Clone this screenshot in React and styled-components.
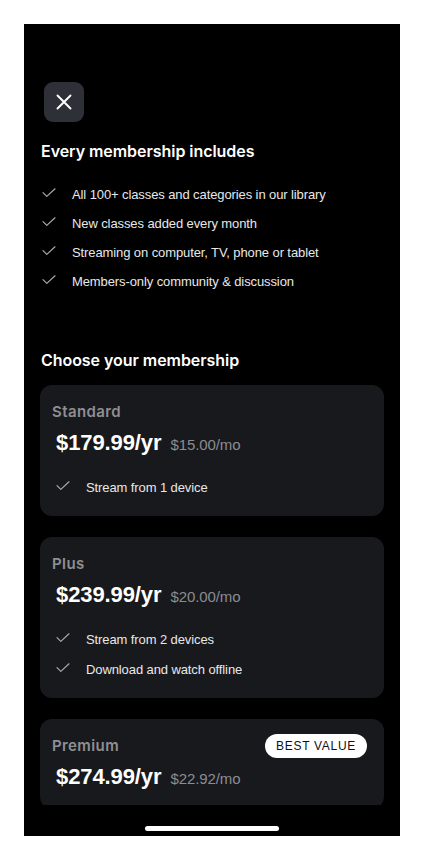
import React from "react";
import styled, { createGlobalStyle } from "styled-components";

const GlobalStyle = createGlobalStyle`
  html, body {
    margin: 0;
    padding: 0;
    background: #ffffff;
  }
  body {
    font-family: "Liberation Sans", Arial, sans-serif;
    -webkit-font-smoothing: antialiased;
  }
`;

const Page = styled.div`
  padding: 24px 24px 27px;
`;

const Screen = styled.div`
  width: 376px;
  height: 812px;
  background: #000;
  display: flex;
  flex-direction: column;
  overflow: hidden;
`;

const Scroll = styled.div`
  flex: 0 0 781px;
  overflow: hidden;
  padding: 58px 16px 0;
  box-sizing: border-box;
`;

const CloseButton = styled.button`
  width: 40px;
  height: 40px;
  margin-left: 4px;
  border: 0;
  border-radius: 9px;
  background: #2e3038;
  display: flex;
  align-items: center;
  justify-content: center;
  padding: 0;
  cursor: pointer;
`;

const SectionTitle = styled.h2`
  margin: ${(p) => p.$top}px 0 0 1px;
  font-family: Inter, "Noto Sans", sans-serif;
  font-weight: 600;
  font-size: 16px;
  line-height: 22px;
  letter-spacing: -0.05px;
  color: #fff;
`;

const List = styled.ul`
  list-style: none;
  margin: ${(p) => p.$top}px 0 0;
  padding: 0 0 0 ${(p) => p.$indent}px;
  display: flex;
  flex-direction: column;
  gap: ${(p) => p.$gap}px;
`;

const Item = styled.li`
  display: flex;
  align-items: center;
  gap: 16px;
  height: 20px;
  font-size: 13px;
  line-height: 20px;
  color: #e8e8e8;
  letter-spacing: -0.1px;
`;

const CheckIcon = styled.svg`
  flex: 0 0 14px;
  width: 14px;
  height: 10px;
  margin-top: -4px;
`;

const Cards = styled.div`
  display: flex;
  flex-direction: column;
  gap: 21px;
  margin-top: 14px;
`;

const Card = styled.div`
  background: #18191d;
  border-radius: 12px;
  padding: 17px 17px 18px 12px;
`;

const CardHead = styled.div`
  display: flex;
  align-items: center;
  justify-content: space-between;
  height: 20px;
`;

const PlanName = styled.div`
  font-family: Inter, "Noto Sans", sans-serif;
  font-weight: 600;
  font-size: 15px;
  line-height: 20px;
  letter-spacing: 0.4px;
  color: #8f8f93;
`;

const Badge = styled.span`
  height: 24px;
  padding: 0 11px;
  border-radius: 12px;
  background: #fff;
  color: #111;
  font-size: 12px;
  letter-spacing: 0.7px;
  display: flex;
  align-items: center;
`;

const PriceRow = styled.div`
  display: flex;
  align-items: baseline;
  gap: 9px;
  height: 28px;
  margin: 7px 0 0 4px;
  line-height: 28px;
`;

const Price = styled.span`
  font-weight: 700;
  font-size: 22px;
  letter-spacing: -0.1px;
  color: #fff;
`;

const Monthly = styled.span`
  font-size: 15px;
  color: #8c8c90;
  letter-spacing: -0.1px;
`;

const BottomBar = styled.div`
  flex: 1;
  display: flex;
  justify-content: center;
  padding-top: 21px;
`;

const HomeIndicator = styled.div`
  width: 134px;
  height: 5px;
  border-radius: 3px;
  background: #fff;
`;

const Check = () => (
  <CheckIcon viewBox="0 0 14 10" fill="none">
    <path
      d="M1 4.6 L4.8 8.4 L13 0.8"
      stroke="#a9a9ad"
      strokeWidth="1.2"
      strokeLinecap="round"
      strokeLinejoin="round"
    />
  </CheckIcon>
);

const included = [
  "All 100+ classes and categories in our library",
  "New classes added every month",
  "Streaming on computer, TV, phone or tablet",
  "Members-only community & discussion",
];

const plans = [
  {
    name: "Standard",
    price: "$179.99/yr",
    monthly: "$15.00/mo",
    features: ["Stream from 1 device"],
  },
  {
    name: "Plus",
    price: "$239.99/yr",
    monthly: "$20.00/mo",
    features: ["Stream from 2 devices", "Download and watch offline"],
  },
  {
    name: "Premium",
    price: "$274.99/yr",
    monthly: "$22.92/mo",
    badge: "BEST VALUE",
    features: [],
  },
];

export default function App() {
  return (
    <Page>
      <GlobalStyle />
      <Screen>
        <Scroll>
          <CloseButton aria-label="Close">
            <svg width="16" height="16" viewBox="0 0 16 16" fill="none">
              <path
                d="M1.5 1.5 L14.5 14.5 M14.5 1.5 L1.5 14.5"
                stroke="#fff"
                strokeWidth="1.9"
                strokeLinecap="round"
              />
            </svg>
          </CloseButton>

          <SectionTitle $top={18}>Every membership includes</SectionTitle>
          <List $top={23} $gap={9} $indent={2}>
            {included.map((text) => (
              <Item key={text}>
                <Check />
                {text}
              </Item>
            ))}
          </List>

          <SectionTitle $top={57}>Choose your membership</SectionTitle>
          <Cards>
            {plans.map((plan) => (
              <Card key={plan.name}>
                <CardHead>
                  <PlanName>{plan.name}</PlanName>
                  {plan.badge && <Badge>{plan.badge}</Badge>}
                </CardHead>
                <PriceRow>
                  <Price>{plan.price}</Price>
                  <Monthly>{plan.monthly}</Monthly>
                </PriceRow>
                {plan.features.length > 0 && (
                  <List $top={21} $gap={10} $indent={4}>
                    {plan.features.map((f) => (
                      <Item key={f}>
                        <Check />
                        {f}
                      </Item>
                    ))}
                  </List>
                )}
              </Card>
            ))}
          </Cards>
        </Scroll>
        <BottomBar>
          <HomeIndicator />
        </BottomBar>
      </Screen>
    </Page>
  );
}
